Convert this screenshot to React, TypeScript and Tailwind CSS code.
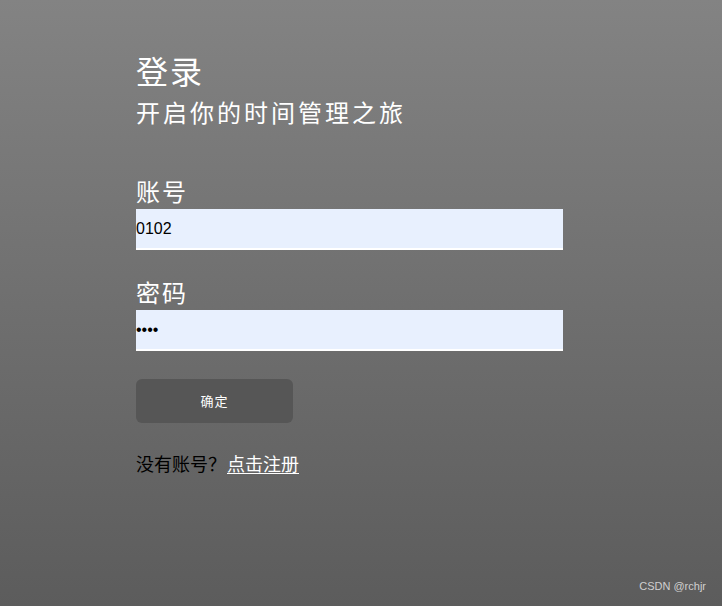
export default function App() {
  const kai = { fontFamily: '"Noto Sans CJK SC", sans-serif' };
  return (
    <div className="relative h-[606px] w-full bg-gradient-to-b from-[#838383] to-[#5c5c5c]">
      <div className="flex flex-col pl-[136px] pt-[50px] text-white" style={kai}>
        <h1 className="text-[32px] leading-[40px] font-normal tracking-[2px]">登录</h1>
        <p className="mt-[6px] text-[24px] leading-[32px] tracking-[3px]">开启你的时间管理之旅</p>

        <label className="mt-[46px] text-[24px] leading-[34px] tracking-[2px]">账号</label>
        <input
          defaultValue="0102"
          className="mt-[1px] h-[41px] w-[427px] border-b-2 border-white bg-[#e8f0fe] text-[16px] text-black outline-none"
          style={{ fontFamily: '"Liberation Sans", Arial, sans-serif' }}
        />

        <label className="mt-[25px] text-[24px] leading-[34px] tracking-[2px]">密码</label>
        <input
          type="password"
          defaultValue="1234"
          className="mt-[1px] h-[41px] w-[427px] border-b-2 border-white bg-[#e8f0fe] text-[16px] text-black outline-none"
          style={{ fontFamily: '"Liberation Sans", Arial, sans-serif' }}
        />

        <button className="mt-[28px] h-[44px] w-[157px] rounded-md bg-[#565656] text-[13px] tracking-[1px] text-white">
          确定
        </button>

        <div className="mt-[28px] flex items-center text-[18px] leading-[24px]">
          <span className="text-black">没有账号？</span>
          <a href="#" className="ml-[1px] text-white underline underline-offset-2">点击注册</a>
        </div>
      </div>
      <div
        className="absolute bottom-[12px] right-[16px] text-[11px] text-[#cfcfcf]"
        style={{ fontFamily: '"Liberation Sans", Arial, sans-serif' }}
      >
        CSDN @rchjr
      </div>
    </div>
  );
}
